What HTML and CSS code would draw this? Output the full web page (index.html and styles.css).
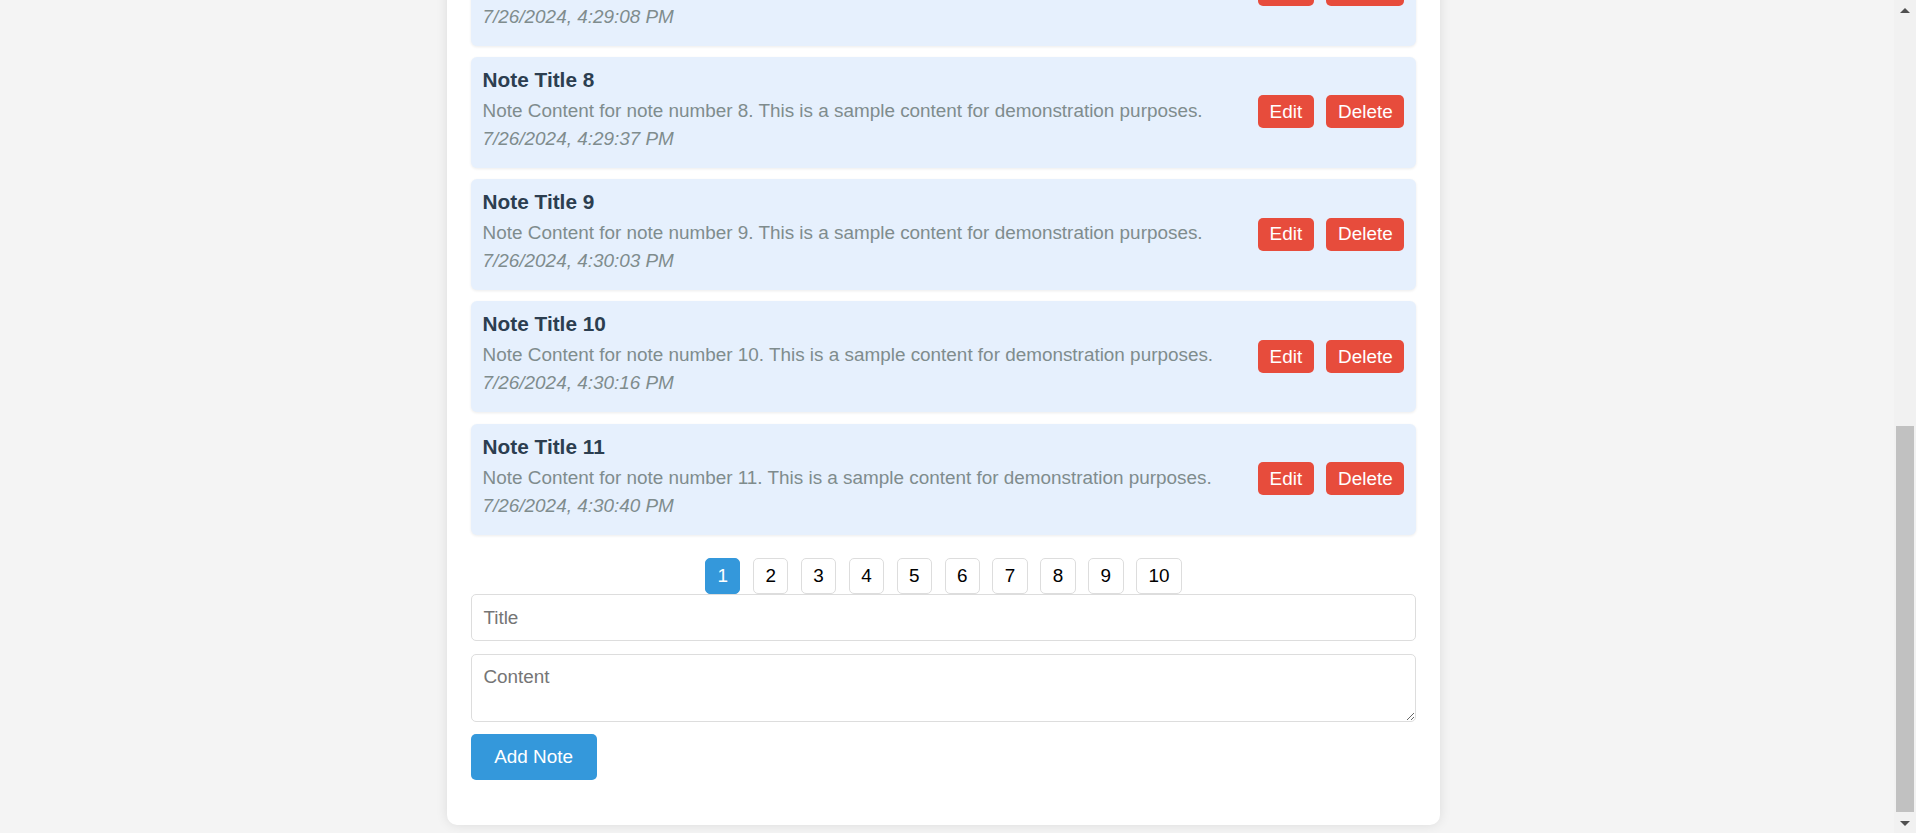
FILE: index.html
```html
<!DOCTYPE html>
<html lang="en">
<head>
<meta charset="utf-8">
<title>Notes App</title>
<link rel="stylesheet" href="styles.css">
</head>
<body>
<div class="app">
  <div class="note-list">
    <div class="note">
      <div class="note-body">
        <h3 class="note-title">Note Title 7</h3>
        <p class="note-text">Note Content for note number 7. This is a sample content for demonstration purposes.</p>
        <p class="note-date">7/26/2024, 4:29:08 PM</p>
      </div>
      <div class="note-actions"><button class="btn btn-danger">Edit</button><button class="btn btn-danger">Delete</button></div>
    </div>
    <div class="note">
      <div class="note-body">
        <h3 class="note-title">Note Title 8</h3>
        <p class="note-text">Note Content for note number 8. This is a sample content for demonstration purposes.</p>
        <p class="note-date">7/26/2024, 4:29:37 PM</p>
      </div>
      <div class="note-actions"><button class="btn btn-danger">Edit</button><button class="btn btn-danger">Delete</button></div>
    </div>
    <div class="note">
      <div class="note-body">
        <h3 class="note-title">Note Title 9</h3>
        <p class="note-text">Note Content for note number 9. This is a sample content for demonstration purposes.</p>
        <p class="note-date">7/26/2024, 4:30:03 PM</p>
      </div>
      <div class="note-actions"><button class="btn btn-danger">Edit</button><button class="btn btn-danger">Delete</button></div>
    </div>
    <div class="note">
      <div class="note-body">
        <h3 class="note-title">Note Title 10</h3>
        <p class="note-text">Note Content for note number 10. This is a sample content for demonstration purposes.</p>
        <p class="note-date">7/26/2024, 4:30:16 PM</p>
      </div>
      <div class="note-actions"><button class="btn btn-danger">Edit</button><button class="btn btn-danger">Delete</button></div>
    </div>
    <div class="note">
      <div class="note-body">
        <h3 class="note-title">Note Title 11</h3>
        <p class="note-text">Note Content for note number 11. This is a sample content for demonstration purposes.</p>
        <p class="note-date">7/26/2024, 4:30:40 PM</p>
      </div>
      <div class="note-actions"><button class="btn btn-danger">Edit</button><button class="btn btn-danger">Delete</button></div>
    </div>
  </div>
  <div class="pagination">
    <button class="page-btn is-active">1</button>
    <button class="page-btn">2</button>
    <button class="page-btn">3</button>
    <button class="page-btn">4</button>
    <button class="page-btn">5</button>
    <button class="page-btn">6</button>
    <button class="page-btn">7</button>
    <button class="page-btn">8</button>
    <button class="page-btn">9</button>
    <button class="page-btn">10</button>
  </div>
  <form class="note-form">
    <input class="field" type="text" placeholder="Title">
    <textarea class="field field-area" placeholder="Content"></textarea>
    <button class="btn btn-primary" type="button">Add Note</button>
  </form>
</div>
<div class="scrollbar" aria-hidden="true">
  <div class="sb-btn"><span class="sb-arrow-up"></span></div>
  <div class="sb-track"><div class="sb-thumb"></div></div>
  <div class="sb-btn"><span class="sb-arrow-down"></span></div>
</div>
<script src="script.js"></script>
</body>
</html>
```

FILE: styles.css
```css
html {
  scrollbar-width: none;
}
html::-webkit-scrollbar {
  display: none;
}
body {
  margin: 0;
  padding: 9px 29px 8px 0;
  background: #f4f4f4;
  font-family: "Liberation Sans", Arial, sans-serif;
  font-size: 18.9px;
  color: #333;
}
.app {
  box-sizing: border-box;
  width: 993px;
  margin: 0 auto;
  padding: 23.6px 23.6px 45.5px;
  background: #fff;
  border-radius: 10px;
  box-shadow: 0 0 12px rgba(0, 0, 0, 0.1);
}
.note {
  display: flex;
  align-items: center;
  justify-content: space-between;
  padding: 11px 12px 12px;
  margin-bottom: 11.3px;
  background: #e6f0fd;
  border-radius: 6px;
  box-shadow: 0 1px 3px rgba(0, 0, 0, 0.08);
}
.note-title {
  margin: 0 0 8px;
  font-size: 20.8px;
  line-height: 24px;
  color: #2c3e50;
}
.note-text {
  margin: 0 0 6px;
  line-height: 22px;
  color: #7f8c8d;
}
.note-date {
  margin: 0 0 6px;
  line-height: 22px;
  color: #7f8c8d;
  font-style: italic;
}
.note-actions {
  display: flex;
  gap: 12.6px;
}
.btn {
  font-family: inherit;
  font-size: 18.9px;
  line-height: 21.7px;
  border: none;
  border-radius: 5px;
  color: #fff;
  cursor: pointer;
}
.btn-danger {
  padding: 5.7px 11.7px;
  background: #e74c3c;
}
.btn-primary {
  padding: 12px 23.6px;
  background: #3498db;
}
.pagination {
  display: flex;
  justify-content: center;
  gap: 12.6px;
  margin-top: 23.2px;
}
.page-btn {
  box-sizing: border-box;
  height: 36px;
  padding: 0 11.4px;
  font-family: inherit;
  font-size: 18.9px;
  background: #fff;
  color: #000;
  border: 1px solid #ddd;
  border-radius: 5px;
}
.page-btn.is-active {
  background: #3498db;
  border-color: #3498db;
  color: #fff;
}
.note-form {
  display: flex;
  flex-direction: column;
  align-items: flex-start;
}
.field {
  box-sizing: border-box;
  width: 100%;
  margin: 0 0 12.3px;
  padding: 11.8px;
  font-family: inherit;
  font-size: 18.9px;
  line-height: 21.7px;
  border: 1px solid #ddd;
  border-radius: 5px;
  color: #333;
}
.field::placeholder {
  color: #757575;
}
.field-area {
  height: 68.4px;
}
.scrollbar {
  position: fixed;
  top: 0;
  right: 0;
  bottom: 0;
  width: 22px;
  display: flex;
  flex-direction: column;
  background: #f1f1f1;
}
.sb-btn {
  height: 20px;
  display: flex;
  align-items: center;
  justify-content: center;
}
.sb-arrow-up {
  width: 0;
  height: 0;
  border-left: 5px solid transparent;
  border-right: 5px solid transparent;
  border-bottom: 5px solid #505050;
}
.sb-arrow-down {
  width: 0;
  height: 0;
  border-left: 5px solid transparent;
  border-right: 5px solid transparent;
  border-top: 5px solid #505050;
}
.sb-track {
  flex: 1;
  display: flex;
  flex-direction: column;
  justify-content: flex-end;
  padding: 0 2px 1px;
}
.sb-thumb {
  height: 386px;
  background: #c1c1c1;
}
```

FILE: script.js
```js
function scrollToEnd() {
  window.scrollTo(0, document.documentElement.scrollHeight);
}
scrollToEnd();
window.addEventListener('load', scrollToEnd);
```
